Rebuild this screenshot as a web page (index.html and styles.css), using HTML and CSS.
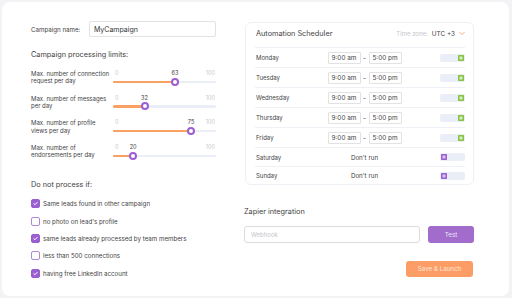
FILE: index.html
```html
<!DOCTYPE html>
<html lang="en">
<head>
    <meta charset="UTF-8">
    <title>Campaign settings</title>
    <link rel="stylesheet" href="styles.css">
</head>
<body>
<div class="card">
    <div class="col-left">
        <div class="name-row">
            <label class="name-label" for="campaignName">Campaign name:</label>
            <input class="text-input name-input" id="campaignName" type="text" value="MyCampaign">
        </div>

        <div class="section-title">Campaign processing limits:</div>

        <div class="limits">
            <div class="limit">
                <div class="limit-label">Max. number of connection<br>request per day</div>
                <div class="slider">
                    <div class="scale">
                        <span>0</span>
                        <span>100</span>
                        <div class="rail"><span class="scale-value" style="left: 61%">63</span></div>
                    </div>
                    <div class="track">
                        <div class="track-fill" style="width: 61%"></div>
                        <div class="rail"><div class="thumb" style="left: 61%"></div></div>
                    </div>
                </div>
            </div>
            <div class="limit">
                <div class="limit-label">Max. number of messages<br>per day</div>
                <div class="slider">
                    <div class="scale">
                        <span>0</span>
                        <span>100</span>
                        <div class="rail"><span class="scale-value" style="left: 29%">32</span></div>
                    </div>
                    <div class="track">
                        <div class="track-fill" style="width: 29%"></div>
                        <div class="rail"><div class="thumb" style="left: 29%"></div></div>
                    </div>
                </div>
            </div>
            <div class="limit">
                <div class="limit-label">Max. number of profile<br>views per day</div>
                <div class="slider">
                    <div class="scale">
                        <span>0</span>
                        <span>100</span>
                        <div class="rail"><span class="scale-value" style="left: 78%">75</span></div>
                    </div>
                    <div class="track">
                        <div class="track-fill" style="width: 78%"></div>
                        <div class="rail"><div class="thumb" style="left: 78%"></div></div>
                    </div>
                </div>
            </div>
            <div class="limit">
                <div class="limit-label">Max. number of<br>endorsements per day</div>
                <div class="slider">
                    <div class="scale">
                        <span>0</span>
                        <span>100</span>
                        <div class="rail"><span class="scale-value" style="left: 17%">20</span></div>
                    </div>
                    <div class="track">
                        <div class="track-fill" style="width: 17%"></div>
                        <div class="rail"><div class="thumb" style="left: 17%"></div></div>
                    </div>
                </div>
            </div>
        </div>

        <div class="section-title skip-title">Do not process if:</div>

        <ul class="checks">
            <li class="check-item">
                <span class="check checked"><svg viewBox="0 0 10 10"><path d="M2.6 5.2 4.3 6.8 7.4 3.4"/></svg></span>
                Same leads found in other campaign
            </li>
            <li class="check-item">
                <span class="check"></span>
                no photo on lead's profile
            </li>
            <li class="check-item">
                <span class="check checked"><svg viewBox="0 0 10 10"><path d="M2.6 5.2 4.3 6.8 7.4 3.4"/></svg></span>
                same leads already processed by team members
            </li>
            <li class="check-item">
                <span class="check"></span>
                less than 500 connections
            </li>
            <li class="check-item">
                <span class="check checked"><svg viewBox="0 0 10 10"><path d="M2.6 5.2 4.3 6.8 7.4 3.4"/></svg></span>
                having free LinkedIn account
            </li>
        </ul>
    </div>

    <div class="col-right">
        <div class="scheduler">
            <div class="scheduler-head">
                <span class="scheduler-title">Automation Scheduler</span>
                <span class="tz-label">Time zone:</span>
                <span class="tz-value">UTC +3</span>
                <svg class="tz-chevron" viewBox="0 0 8 6"><path d="M1 1.5 4 4.5 7 1.5"/></svg>
            </div>

            <div class="day-row">
                <span class="day">Monday</span>
                <div class="times"><span class="time">9:00 am</span><span class="dash">-</span><span class="time">5:00 pm</span></div>
                <span class="toggle on"><span class="knob"></span></span>
            </div>
            <div class="day-row">
                <span class="day">Tuesday</span>
                <div class="times"><span class="time">9:00 am</span><span class="dash">-</span><span class="time">5:00 pm</span></div>
                <span class="toggle on"><span class="knob"></span></span>
            </div>
            <div class="day-row">
                <span class="day">Wednesday</span>
                <div class="times"><span class="time">9:00 am</span><span class="dash">-</span><span class="time">5:00 pm</span></div>
                <span class="toggle on"><span class="knob"></span></span>
            </div>
            <div class="day-row">
                <span class="day">Thursday</span>
                <div class="times"><span class="time">9:00 am</span><span class="dash">-</span><span class="time">5:00 pm</span></div>
                <span class="toggle on"><span class="knob"></span></span>
            </div>
            <div class="day-row">
                <span class="day">Friday</span>
                <div class="times"><span class="time">9:00 am</span><span class="dash">-</span><span class="time">5:00 pm</span></div>
                <span class="toggle on"><span class="knob"></span></span>
            </div>
            <div class="day-row day-off">
                <span class="day">Saturday</span>
                <div class="times"><span class="dont-run">Don't run</span></div>
                <span class="toggle"><span class="knob"></span></span>
            </div>
            <div class="day-row day-off day-last">
                <span class="day">Sunday</span>
                <div class="times"><span class="dont-run">Don't run</span></div>
                <span class="toggle"><span class="knob"></span></span>
            </div>
        </div>

        <div class="zapier-title">Zapier integration</div>
        <div class="zapier-row">
            <input class="text-input webhook-input" type="text" placeholder="Webhook">
            <button class="btn btn-test">Test</button>
        </div>

        <div class="actions">
            <button class="btn btn-launch">Save &amp; Launch</button>
        </div>
    </div>
</div>
</body>
</html>
```

FILE: styles.css
```css
* {
    box-sizing: border-box;
}

body {
    margin: 0;
    width: 512px;
    height: 298px;
    overflow: hidden;
    background-color: #f3f3f6;
    font-family: "Inter", "DejaVu Sans", sans-serif;
    color: #424242;
}

.card {
    display: flex;
    margin: 2px 3px 2px 2px;
    height: 294px;
    padding: 19px 0 0 29px;
    background-color: #fff;
    border-radius: 8px;
}

/* left column */

.col-left {
    width: 185px;
}

.name-row {
    display: flex;
    align-items: center;
    height: 16px;
}

.name-label {
    width: 58px;
    font-size: 6.2px;
}

.text-input {
    border: 1px solid #e2e2e2;
    border-radius: 2px;
    font-family: inherit;
    color: #333;
    outline: none;
}

.name-input {
    width: 127px;
    height: 16px;
    padding: 0 0 0 4px;
    font-size: 7px;
}

.section-title {
    margin-top: 13px;
    font-size: 7.3px;
    line-height: 10px;
}

.limits {
    margin-top: 9px;
}

.limit {
    display: flex;
    height: 24.7px;
}

.limit-label {
    width: 82px;
    padding-top: 1px;
    font-size: 6px;
    line-height: 7.4px;
}

.slider {
    width: 103px;
}

.scale {
    position: relative;
    display: flex;
    justify-content: space-between;
    height: 8px;
    padding: 0 1px 0 2px;
    font-size: 5.6px;
    line-height: 8px;
    color: #c9c9cf;
}

.scale-value {
    position: absolute;
    top: 0;
    transform: translateX(-50%);
    color: #424242;
}

.track {
    position: relative;
    height: 8px;
    margin-top: 0.5px;
}

.track::before,
.track-fill {
    content: "";
    position: absolute;
    left: 0;
    top: 3px;
    height: 2.5px;
    border-radius: 2px;
}

.track::before {
    right: 0;
    background-color: #eaeef7;
}

.track-fill {
    background-color: #f8a162;
}

.rail {
    position: absolute;
    left: 4px;
    right: 4px;
    top: 0;
    height: 8px;
}

.thumb {
    position: absolute;
    top: 0;
    width: 8px;
    height: 8px;
    margin-left: -4px;
    border: 2px solid #9a5fd0;
    border-radius: 50%;
    background-color: #fff;
}

.skip-title {
    margin-top: 12.5px;
}

.checks {
    margin: 5px 0 0;
    padding: 0;
    list-style: none;
}

.check-item {
    display: flex;
    align-items: center;
    height: 17.3px;
    font-size: 6.2px;
}

.check {
    width: 9px;
    height: 9px;
    margin-right: 3px;
    border: 1px solid #ab88da;
    border-radius: 2px;
}

.check.checked {
    border-color: #9a5fd0;
    background-color: #9a5fd0;
}

.check svg {
    display: block;
    width: 7px;
    height: 7px;
    fill: none;
    stroke: #fff;
    stroke-width: 1.4;
    stroke-linecap: round;
    stroke-linejoin: round;
}

/* right column */

.col-right {
    width: 229px;
    margin-left: 29px;
    padding-top: 1px;
}

.scheduler {
    height: 163px;
    padding: 0 8px 0 9px;
    border: 1px solid #eef0f6;
    border-radius: 6px;
}

.scheduler-head {
    display: flex;
    align-items: center;
    height: 25px;
    padding: 0 0 3px 1px;
    border-bottom: 1px solid #eef0f6;
}

.scheduler-title {
    flex: 1;
    font-size: 7.3px;
}

.tz-label {
    font-size: 6px;
    color: #c5c5cc;
}

.tz-value {
    margin-left: 4px;
    font-size: 6.4px;
}

.tz-chevron {
    width: 6px;
    height: 5px;
    margin-left: 4px;
    fill: none;
    stroke: #f8a162;
    stroke-width: 1.2;
    stroke-linecap: round;
    stroke-linejoin: round;
}

.day-row {
    display: flex;
    align-items: center;
    height: 20px;
    border-bottom: 1px solid #eef0f6;
}

.day-off {
    height: 19px;
}

.day-last {
    height: 17px;
    border-bottom: none;
}

.day {
    width: 72px;
    padding-left: 1px;
    font-size: 6px;
}

.times {
    display: flex;
    align-items: center;
    justify-content: center;
    width: 75px;
}

.time {
    width: 33px;
    height: 12px;
    border: 1px solid #e2e2e2;
    border-radius: 1px;
    font-size: 6.4px;
    line-height: 10px;
    text-align: center;
}

.dash {
    width: 8px;
    font-size: 6.4px;
    text-align: center;
}

.dont-run {
    font-size: 6.2px;
}

.toggle {
    display: flex;
    align-items: center;
    justify-content: flex-start;
    width: 25px;
    height: 8px;
    margin-left: auto;
    padding: 0 1px;
    border-radius: 2px;
    background-color: #e9eef7;
}

.toggle.on {
    justify-content: flex-end;
}

.knob {
    width: 6px;
    height: 6px;
    border-radius: 1px;
    background-color: #9a5fd0;
    box-shadow: inset 0 0 0 1.5px #9a5fd0, inset 0 0 0 3px #d9c4ef;
}

.toggle.on .knob {
    background-color: #86c145;
    box-shadow: inset 0 0 0 1.5px #86c145, inset 0 0 0 3px #d6eec0;
}

.zapier-title {
    margin-top: 21.5px;
    margin-left: -1px;
    font-size: 7.3px;
    line-height: 10px;
}

.zapier-row {
    display: flex;
    margin-top: 9px;
    margin-left: -1px;
}

.webhook-input {
    width: 176px;
    height: 17px;
    padding: 0 0 0 6px;
    border-color: #dcdcdc;
    border-radius: 3px;
    font-size: 6px;
}

.webhook-input::placeholder {
    color: #c4c4c8;
}

.btn {
    border: none;
    border-radius: 3px;
    font-family: inherit;
    color: #fff;
}

.btn-test {
    width: 46px;
    height: 17px;
    margin-left: 8px;
    background-color: #a16ccb;
    font-size: 6.2px;
    color: #eee3f6;
}

.actions {
    display: flex;
    justify-content: flex-end;
    margin-top: 18px;
    padding-right: 1px;
}

.btn-launch {
    width: 67px;
    height: 16.5px;
    background-color: #fd9d66;
    font-size: 6.2px;
    color: #fde6d8;
}
```
